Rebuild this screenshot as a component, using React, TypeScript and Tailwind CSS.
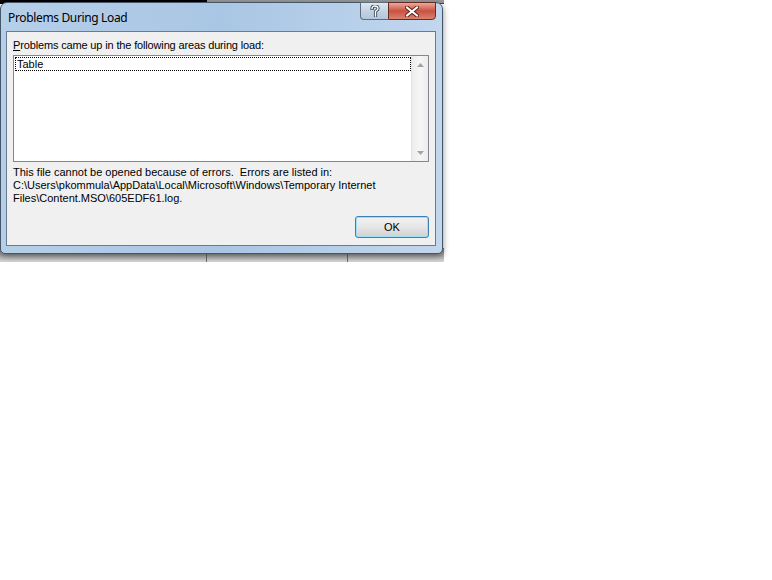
import React from "react";

const body = { fontFamily: '"Liberation Sans", Arial, sans-serif' };

function HelpGlyph() {
  return (
    <svg width="10" height="12" viewBox="0 0 10 12">
      <path
        d="M2 3.5 C2 1.5 3.5 1 5 1 C6.8 1 8 2 8 3.5 C8 5 6.2 5.5 5.5 6.5 L5.5 8 M5.5 9.5 L5.5 11"
        fill="none"
        stroke="#3a4a5c"
        strokeWidth="3.2"
        strokeLinecap="square"
      />
      <path
        d="M2 3.5 C2 1.5 3.5 1 5 1 C6.8 1 8 2 8 3.5 C8 5 6.2 5.5 5.5 6.5 L5.5 8 M5.5 9.5 L5.5 11"
        fill="none"
        stroke="#ffffff"
        strokeWidth="1.4"
        strokeLinecap="square"
      />
    </svg>
  );
}

function CloseGlyph() {
  return (
    <svg width="14" height="11" viewBox="0 0 14 11">
      <path d="M2 1.5 L12 9.5 M12 1.5 L2 9.5" stroke="#5b1f17" strokeWidth="4" strokeLinecap="square" />
      <path d="M2 1.5 L12 9.5 M12 1.5 L2 9.5" stroke="#ffffff" strokeWidth="2" strokeLinecap="square" />
    </svg>
  );
}

function ArrowUp() {
  return (
    <svg width="7" height="4" viewBox="0 0 7 4">
      <path d="M3.5 0 L7 4 L0 4 Z" fill="#a3a3a3" />
    </svg>
  );
}

function ArrowDown() {
  return (
    <svg width="7" height="4" viewBox="0 0 7 4">
      <path d="M0 0 L7 0 L3.5 4 Z" fill="#a3a3a3" />
    </svg>
  );
}

export default function App() {
  return (
    <div className="relative w-[772px] h-[580px] bg-white overflow-hidden">
      {/* desktop visible behind the dialog */}
      <div className="absolute left-0 top-0 w-[444px] h-[262px]">
        <div className="flex h-[4px]">
          <div className="w-[207px] bg-black" />
          <div className="flex-1 bg-[#9a9a9a] border-b border-[#4a4a4a]" />
        </div>
        <div className="absolute left-0 top-[248px] w-[444px] h-[14px] flex bg-gradient-to-b from-[#7a7a7a] to-[#d8d8d8]">
          <div className="w-[207px] border-r border-[#6a6a6a]" />
          <div className="w-[141px] border-r border-[#6a6a6a]" />
        </div>
      </div>

      {/* dialog window */}
      <div className="absolute left-0 top-[2px] w-[443px] h-[252px] flex flex-col rounded-t-[7px] rounded-b-[5px] border border-[#46566a] bg-gradient-to-r from-[#b6cfe9] via-[#a9c6e4] to-[#c2d7ee] pl-[5px] pr-[6px] pb-[7px] shadow-[0_2px_6px_rgba(0,0,0,0.45)]">
        {/* title bar */}
        <div className="relative h-[28px] shrink-0 flex items-center pl-[2px]">
          <span className="text-[12px] text-black leading-none pt-[2px] tracking-[-0.35px]" style={{ fontFamily: '"Noto Sans", "Open Sans", sans-serif' }}>
            Problems During Load
          </span>
          <div className="absolute top-[-1px] right-[0px] flex h-[18px]">
            <div className="w-[28px] h-full flex items-center justify-center rounded-bl-[4px] border border-[#5d6d80] border-r-0 bg-gradient-to-b from-[#dfe8f2] via-[#c4d3e3] to-[#b4c7da]">
              <HelpGlyph />
            </div>
            <div className="w-[48px] h-full flex items-center justify-center rounded-br-[4px] border border-[#6b2a22] bg-gradient-to-b from-[#e9a99c] via-[#c9503f] to-[#d9826f]">
              <CloseGlyph />
            </div>
          </div>
        </div>

        {/* client area */}
        <div className="flex-1 flex flex-col bg-[#f0f0f0] border border-[#6b7b8f] px-[6px] pt-[7px] pb-[7px] text-[11px] leading-[13px] text-black" style={body}>
          <div className="h-[13px] tracking-[-0.15px]">
            <span className="underline underline-offset-[1px]">P</span>roblems came up in the following areas during load:
          </div>
          <div className="mt-[3px] h-[107px] flex border border-[#828790] bg-white">
            <div className="flex-1 pl-[1px] pt-[1px]">
              <div className="h-[14px] border border-dotted border-black pl-[1px] leading-[12px]">Table</div>
            </div>
            <div className="w-[17px] flex flex-col justify-between bg-gradient-to-r from-[#ececec] via-[#f6f6f6] to-[#ececec] border-l border-[#e4e4e4]">
              <div className="h-[17px] flex items-center justify-center">
                <ArrowUp />
              </div>
              <div className="h-[17px] flex items-center justify-center">
                <ArrowDown />
              </div>
            </div>
          </div>
          <div className="mt-[4px] h-[39px]">
            <div>This file cannot be opened because of errors.&nbsp; Errors are listed in:</div>
            <div>C:\Users\pkommula\AppData\Local\Microsoft\Windows\Temporary Internet</div>
            <div>Files\Content.MSO\605EDF61.log.</div>
          </div>
          <div className="mt-[11px] flex justify-end">
            <button className="w-[74px] h-[22px] rounded-[3px] border border-[#3c7fb1] bg-gradient-to-b from-[#f2f2f2] via-[#e6e6e6] to-[#d0d0d0] shadow-[inset_0_0_0_1px_#9ee0f8] text-[11px] text-black" style={body}>
              OK
            </button>
          </div>
        </div>
      </div>
    </div>
  );
}
